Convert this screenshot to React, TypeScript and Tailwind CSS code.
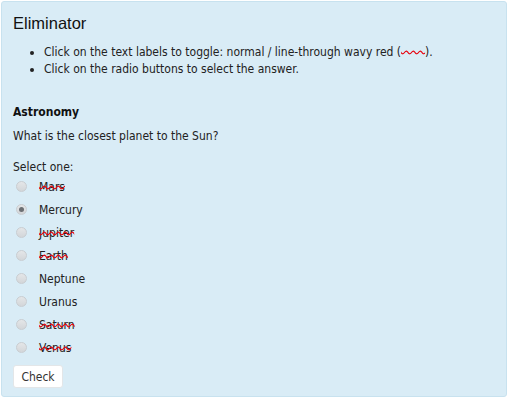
const OPTIONS: { label: string; struck: boolean; checked?: boolean }[] = [
  { label: 'Mars', struck: true },
  { label: 'Mercury', struck: false, checked: true },
  { label: 'Jupiter', struck: true },
  { label: 'Earth', struck: true },
  { label: 'Neptune', struck: false },
  { label: 'Uranus', struck: false },
  { label: 'Saturn', struck: true },
  { label: 'Venus', struck: true },
];

function Radio({ checked }: { checked?: boolean }) {
  return (
    <span className="w-[11px] h-[11px] rounded-full border border-[#c9cdd1] bg-gradient-to-b from-[#e4e6e8] to-[#d3d6d9] flex items-center justify-center shrink-0">
      {checked && <span className="w-[5px] h-[5px] rounded-full bg-[#6b6f73]" />}
    </span>
  );
}

export default function App() {
  return (
    <div className="p-px w-[509px] h-[400px] bg-white font-['DejaVu_Sans_Condensed',Tahoma,sans-serif] text-[12px] text-[#222]">
      <div className="h-[396px] w-[506px] bg-[#d9ecf6] border border-[#c8e2ef] rounded-[3px] px-[11px] pt-[11px]">
        {/* header */}
        <h1 className="font-['Liberation_Sans',Arial,sans-serif] text-[16.5px] leading-[20px] text-[#111]">Eliminator</h1>
        <ul className="list-disc pl-[31px] mt-[11px] leading-[17px]">
          <li>
            Click on the text labels to toggle: normal / line-through wavy red (
            <span className="line-through decoration-wavy decoration-red-600">{'\u00a0\u00a0\u00a0\u00a0\u00a0\u00a0\u00a0'}</span>
            ).
          </li>
          <li>Click on the radio buttons to select the answer.</li>
        </ul>

        {/* question */}
        <h2 className="font-bold mt-[26px] leading-[17px] text-[#111]">Astronomy</h2>
        <p className="mt-[7px] leading-[17px]">What is the closest planet to the Sun?</p>
        <p className="mt-[14px] leading-[17px]">Select one:</p>
        <div className="flex flex-col -mt-px">
          {OPTIONS.map(o => (
            <label key={o.label} className="flex items-center h-[23px] pl-[3px]">
              <Radio checked={o.checked} />
              <span
                className={`ml-[12px] ${o.struck ? 'line-through decoration-wavy decoration-red-600' : ''}`}
              >
                {o.label}
              </span>
            </label>
          ))}
        </div>
        <button className="mt-[6px] h-[23px] w-[50px] bg-white border border-[#e3e6e8] rounded-[3px] text-[12px] text-[#333]">
          Check
        </button>
      </div>
    </div>
  );
}
